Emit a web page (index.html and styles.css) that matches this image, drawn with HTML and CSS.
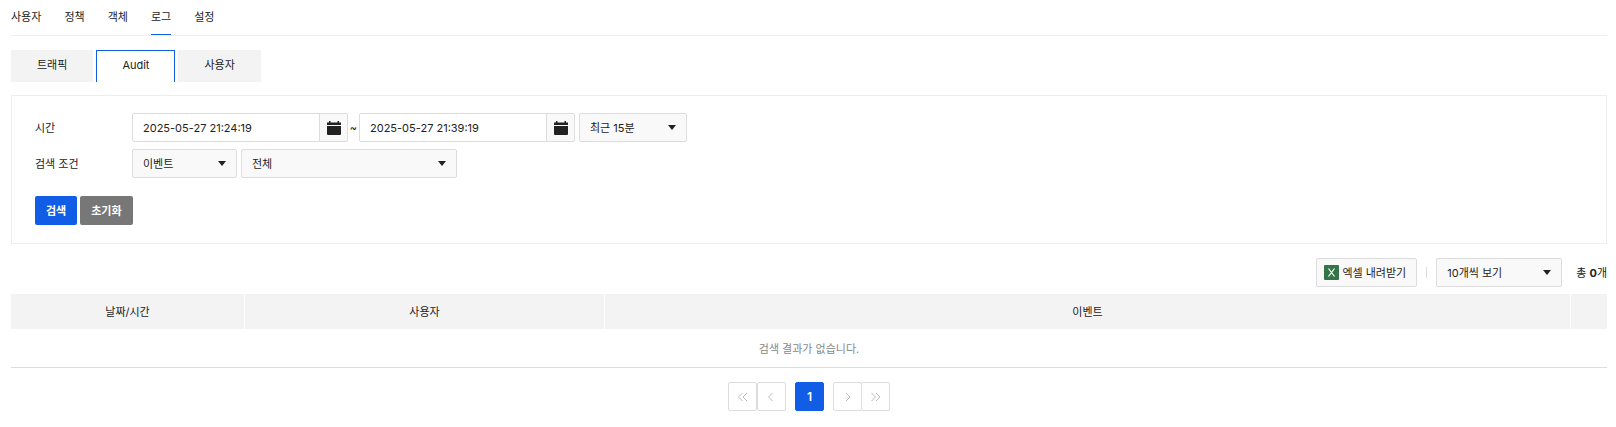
FILE: index.html
```html
<!DOCTYPE html>
<html lang="ko">
<head>
    <meta charset="UTF-8">
    <meta name="viewport" content="width=device-width, initial-scale=1.0">
    <title>로그 - Audit</title>
    <link rel="stylesheet" href="styles.css">
</head>
<body>
    <!-- 상단 메뉴 -->
    <nav class="main-nav">
        <a href="#">사용자</a>
        <a href="#">정책</a>
        <a href="#">객체</a>
        <a href="#" class="active">로그</a>
        <a href="#">설정</a>
    </nav>

    <!-- 탭 -->
    <div class="tabs">
        <a href="#">트래픽</a>
        <a href="#" class="active">Audit</a>
        <a href="#">사용자</a>
    </div>

    <!-- 검색 조건 -->
    <form class="search-box">
        <div class="search-row">
            <label class="row-label" for="startTime">시간</label>
            <div class="date-group">
                <input type="text" id="startTime" value="2025-05-27 21:24:19">
                <button type="button" class="calendar-btn" aria-label="시작 시간 선택">
                    <svg width="14" height="14" viewBox="0 0 14 14"><path d="M0 1.5h2V0h1.5v1.5h7V0H12v1.5h2V4H0zM0 5h14v8a1 1 0 0 1-1 1H1a1 1 0 0 1-1-1z"/></svg>
                </button>
            </div>
            <span class="tilde">~</span>
            <div class="date-group">
                <input type="text" id="endTime" value="2025-05-27 21:39:19" aria-label="종료 시간">
                <button type="button" class="calendar-btn" aria-label="종료 시간 선택">
                    <svg width="14" height="14" viewBox="0 0 14 14"><path d="M0 1.5h2V0h1.5v1.5h7V0H12v1.5h2V4H0zM0 5h14v8a1 1 0 0 1-1 1H1a1 1 0 0 1-1-1z"/></svg>
                </button>
            </div>
            <select class="select-range" aria-label="기간">
                <option>최근 15분</option>
            </select>
        </div>
        <div class="search-row">
            <label class="row-label" for="condition">검색 조건</label>
            <select class="select-condition" id="condition">
                <option>이벤트</option>
            </select>
            <select class="select-event" aria-label="이벤트">
                <option>전체</option>
            </select>
        </div>
        <div class="search-buttons">
            <button type="button" class="btn btn-primary">검색</button>
            <button type="button" class="btn btn-reset">초기화</button>
        </div>
    </form>

    <!-- 목록 도구 -->
    <div class="list-tools">
        <button type="button" class="btn-excel">
            <svg width="15" height="15" viewBox="0 0 15 15"><rect width="15" height="15" rx="1" fill="#347547"/><path d="M4.5 3.5l6 8M10.5 3.5l-6 8" fill="none" stroke="#fff" stroke-width="1.2"/></svg>
            엑셀 내려받기
        </button>
        <span class="divider"></span>
        <select class="select-size" aria-label="페이지 크기">
            <option>10개씩 보기</option>
        </select>
        <span class="total">총 <strong>0</strong>개</span>
    </div>

    <!-- 로그 목록 -->
    <table class="log-table">
        <colgroup>
            <col class="col-date">
            <col class="col-user">
            <col>
            <col class="col-detail">
        </colgroup>
        <thead>
            <tr>
                <th>날짜/시간</th>
                <th>사용자</th>
                <th>이벤트</th>
                <th></th>
            </tr>
        </thead>
        <tbody>
            <tr>
                <td colspan="4">검색 결과가 없습니다.</td>
            </tr>
        </tbody>
    </table>

    <!-- 페이지 이동 -->
    <div class="pagination">
        <div class="page-group">
            <button type="button" aria-label="처음"><svg width="10" height="10" viewBox="0 0 10 10"><path d="M4.5 1L.5 5l4 4M9 1L5 5l4 4"/></svg></button>
            <button type="button" aria-label="이전"><svg width="10" height="10" viewBox="0 0 10 10"><path d="M5.500 1l-4 4 4 4"/></svg></button>
        </div>
        <button type="button" class="current">1</button>
        <div class="page-group page-next">
            <button type="button" aria-label="다음"><svg width="10" height="10" viewBox="0 0 10 10"><path d="M3 1l4 4-4 4"/></svg></button>
            <button type="button" aria-label="마지막"><svg width="10" height="10" viewBox="0 0 10 10"><path d="M.5 1l4 4-4 4M5 1l4 4-4 4"/></svg></button>
        </div>
    </div>
</body>
</html>
```
FILE: styles.css
```css
/* 기본 스타일 */
* {
    box-sizing: border-box;
}

body {
    margin: 0;
    padding: 0 9px 0 11px;
    background-color: #fff;
    color: #222;
    font-family: Inter, "Noto Sans CJK KR", sans-serif;
    font-size: 11px;
    line-height: 18px;
}

a {
    color: inherit;
    text-decoration: none;
}

button,
input,
select {
    margin: 0;
    font-family: inherit;
    font-size: 11px;
    line-height: 18px;
    color: #222;
}

button {
    cursor: pointer;
}

/* 상단 메뉴 */
.main-nav {
    display: flex;
    gap: 23px;
    height: 36px;
    border-bottom: 1px solid #eee;
}

.main-nav a {
    padding-top: 8px;
}

.main-nav .active {
    border-bottom: 1px solid #125de6;
}

/* 탭 */
.tabs {
    display: flex;
    gap: 3px;
    margin-top: 14px;
}

.tabs a {
    height: 32px;
    padding: 6px 26px;
    background-color: #f3f3f3;
}

.tabs .active {
    padding: 5px 25px;
    border: 1px solid #125de6;
    border-bottom: none;
    background-color: #fff;
}

/* 검색 조건 */
.search-box {
    margin-top: 13px;
    padding: 18px 23px;
    padding-top: 17px;
    border: 1px solid #eee;
}

.search-row {
    display: flex;
    align-items: center;
    margin-bottom: 7px;
}

.row-label {
    width: 97px;
}

.date-group {
    display: flex;
}

.date-group input {
    width: 188px;
    height: 29px;
    padding: 0 10px;
    border: 1px solid #ddd;
    border-radius: 2px 0 0 2px;
}

.calendar-btn {
    display: flex;
    align-items: center;
    justify-content: center;
    width: 29px;
    height: 29px;
    margin-left: -1px;
    padding: 1px 0 0;
    border: 1px solid #ddd;
    border-radius: 0 2px 2px 0;
    background-color: #f9f9f9;
    fill: #222;
}

.tilde {
    width: 11px;
    text-align: center;
}

select {
    height: 29px;
    padding: 0 10px;
    border: 1px solid #ddd;
    border-radius: 2px;
    appearance: none;
    background: #f9f9f9 url("data:image/svg+xml,%3Csvg xmlns='http://www.w3.org/2000/svg' width='8' height='5'%3E%3Cpath d='M0 0h8L4 5z' fill='%23222'/%3E%3C/svg%3E") no-repeat right 10px center;
}

.select-range {
    width: 108px;
    margin-left: 4px;
}

.select-condition {
    width: 105px;
}

.select-event {
    width: 216px;
    margin-left: 4px;
}

.search-buttons {
    display: flex;
    gap: 3px;
    margin-top: 18px;
}

.btn {
    height: 29px;
    padding: 0 11px;
    border: none;
    border-radius: 2px;
    color: #fff;
    font-weight: 600;
}

.btn-primary {
    background-color: #125de6;
}

.btn-reset {
    background-color: #777;
}

/* 목록 도구 */
.list-tools {
    display: flex;
    align-items: center;
    justify-content: flex-end;
    margin: 14px 0 7px;
}

.btn-excel {
    display: flex;
    align-items: center;
    gap: 3px;
    height: 29px;
    padding: 0 10px 0 7px;
    border: 1px solid #ddd;
    border-radius: 2px;
    background-color: #f9f9f9;
}

.divider {
    width: 1px;
    height: 11px;
    margin: 0 9px;
    background-color: #ddd;
}

.select-size {
    width: 126px;
}

.total {
    margin-left: 14px;
}

/* 로그 목록 */
.log-table {
    width: 100%;
    border-collapse: separate;
    border-spacing: 0;
    table-layout: fixed;
}

.col-date {
    width: 234px;
}

.col-user {
    width: 360px;
}

.col-detail {
    width: 36px;
}

.log-table th {
    height: 35px;
    padding: 0;
    border-right: 1px solid #fff;
    background-color: #f3f3f3;
    font-weight: normal;
}

.log-table th:last-child {
    border-right: none;
}

.log-table td {
    height: 39px;
    padding: 2px 0 0;
    border-bottom: 1px solid #ddd;
    color: #888;
    text-align: center;
}

/* 페이지 이동 */
.pagination {
    display: flex;
    justify-content: center;
    gap: 9px;
    margin: 14px 0;
}

.page-group {
    display: flex;
}

.pagination button {
    display: flex;
    align-items: center;
    justify-content: center;
    width: 29px;
    height: 29px;
    padding: 0;
    border: 1px solid #ddd;
    border-radius: 2px;
    background-color: #fff;
    fill: none;
    stroke: #bbb;
}

.page-next button + button {
    margin-left: -1px;
}

.pagination .current {
    border-color: #125de6;
    background-color: #125de6;
    color: #fff;
    font-size: 12px;
    font-weight: 600;
    stroke: none;
}
```
